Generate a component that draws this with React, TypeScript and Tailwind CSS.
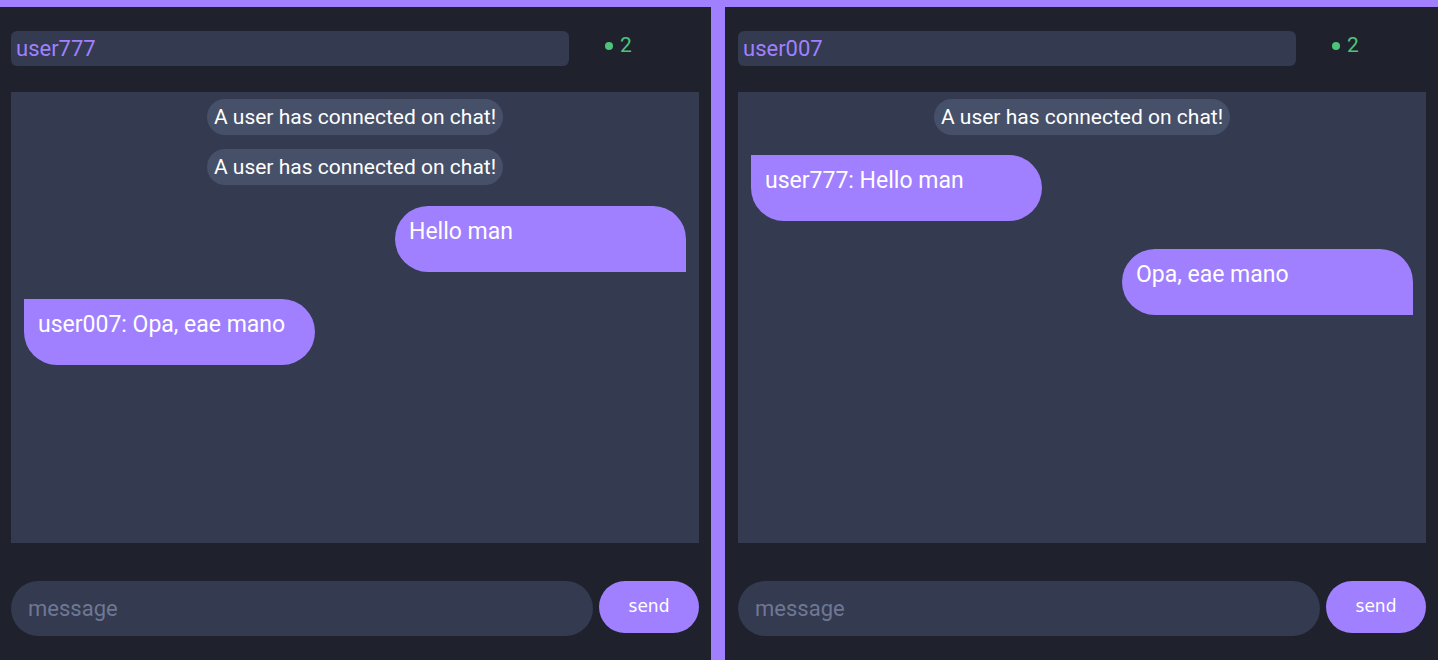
import React from 'react'

type Msg =
  | { kind: 'system'; text: string }
  | { kind: 'sent'; text: string }
  | { kind: 'received'; text: string }

const panels: { user: string; online: number; messages: Msg[] }[] = [
  {
    user: 'user777',
    online: 2,
    messages: [
      { kind: 'system', text: 'A user has connected on chat!' },
      { kind: 'system', text: 'A user has connected on chat!' },
      { kind: 'sent', text: 'Hello man' },
      { kind: 'received', text: 'user007: Opa, eae mano' },
    ],
  },
  {
    user: 'user007',
    online: 2,
    messages: [
      { kind: 'system', text: 'A user has connected on chat!' },
      { kind: 'received', text: 'user777: Hello man' },
      { kind: 'sent', text: 'Opa, eae mano' },
    ],
  },
]

function Message({ msg }: { msg: Msg }) {
  if (msg.kind === 'system') {
    return (
      <div className="flex justify-center">
        <span className="bg-[#465069] text-white text-[21px] leading-[36px] h-[36px] px-[7px] rounded-[18px]">
          {msg.text}
        </span>
      </div>
    )
  }
  const sent = msg.kind === 'sent'
  return (
    <div className={sent ? 'flex justify-end mt-[7px] mb-[7px]' : 'flex justify-start mt-[6px] mb-[7px]'}>
      <div
        className={
          'w-[291px] h-[66px] bg-[#a080ff] text-white text-[23px] leading-[26px] pt-[13px] px-[14px] ' +
          (sent ? 'rounded-[33px] rounded-br-none' : 'rounded-[33px] rounded-tl-none')
        }
      >
        {msg.text}
      </div>
    </div>
  )
}

function ChatPanel({
  user,
  online,
  messages,
  left,
}: {
  user: string
  online: number
  messages: Msg[]
  left: boolean
}) {
  return (
    <div className={left ? 'bg-[#1f212d] pl-[11px] pr-3 py-6 flex flex-col' : 'bg-[#1f212d] pl-[13px] pr-3 py-6 flex flex-col'}>
      <div className="flex items-center">
        <div className="flex-1 h-[35px] bg-[#343a4f] rounded-[6px] px-[5px] text-[#a080ff] text-[22px] leading-[35px]">
          {user}
        </div>
        <div className="w-[130px] pl-9 flex items-center gap-[7px] text-[#4ec47a] text-[21px] leading-none -mt-[6px]">
          <span className="w-[8px] h-[8px] rounded-full bg-[#4ec47a]" />
          <span>{online}</span>
        </div>
      </div>
      <div className="mt-[26px] h-[451px] bg-[#343a4f] px-[13px] pt-[7px] flex flex-col gap-[14px]">
        {messages.map((m, i) => (
          <Message key={i} msg={m} />
        ))}
      </div>
      <div className="mt-[38px] flex gap-[6px]">
        <div className="flex-1 h-[55px] bg-[#343a4f] rounded-full px-[17px] text-[#6e7894] text-[22px] leading-[55px]">
          message
        </div>
        <button className="w-[100px] h-[52px] bg-[#a080ff] rounded-full text-white text-[17px] font-['DejaVu_Sans',sans-serif]">
          send
        </button>
      </div>
    </div>
  )
}

export default function App() {
  return (
    <div className="w-[1438px] h-[660px] bg-[#a080ff] pt-[7px] font-['Roboto',sans-serif] overflow-hidden">
      <div className="grid grid-cols-[711px_713px] gap-[14px] h-[653px]">
        {panels.map((p, i) => (
          <ChatPanel key={p.user} left={i === 0} {...p} />
        ))}
      </div>
    </div>
  )
}
